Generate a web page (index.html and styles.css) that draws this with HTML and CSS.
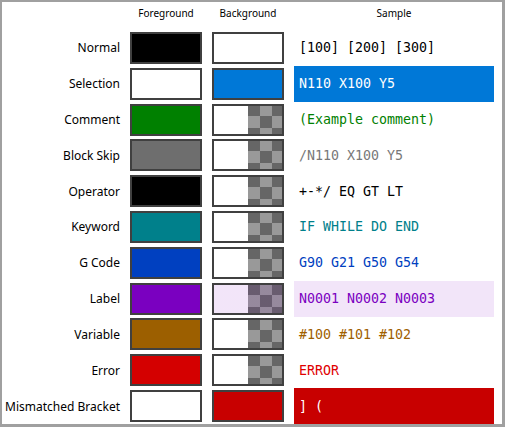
FILE: index.html
```html
<!DOCTYPE html>
<html>
<head>
<meta charset="utf-8">
<link rel="stylesheet" href="styles.css">
</head>
<body>
<div class="panel">
  <div class="head"></div>
  <div class="head">Foreground</div>
  <div class="head">Background</div>
  <div class="head">Sample</div>

  <div class="label">Normal</div>
  <div class="sw k-black"></div>
  <div class="sw k-white"></div>
  <div class="sample t-black">[100] [200] [300]</div>

  <div class="label">Selection</div>
  <div class="sw k-white"></div>
  <div class="sw k-blue"></div>
  <div class="sample t-white k-blue">N110 X100 Y5</div>

  <div class="label">Comment</div>
  <div class="sw k-green"></div>
  <div class="sw check"></div>
  <div class="sample t-green">(Example comment)</div>

  <div class="label">Block Skip</div>
  <div class="sw k-gray"></div>
  <div class="sw check"></div>
  <div class="sample t-gray">/N110 X100 Y5</div>

  <div class="label">Operator</div>
  <div class="sw k-black"></div>
  <div class="sw check"></div>
  <div class="sample t-black">+-*/ EQ GT LT</div>

  <div class="label">Keyword</div>
  <div class="sw k-teal"></div>
  <div class="sw check"></div>
  <div class="sample t-teal">IF WHILE DO END</div>

  <div class="label">G Code</div>
  <div class="sw k-navy"></div>
  <div class="sw check"></div>
  <div class="sample t-navy">G90 G21 G50 G54</div>

  <div class="label">Label</div>
  <div class="sw k-purple"></div>
  <div class="sw check k-tint"></div>
  <div class="sample t-purple k-tint">N0001 N0002 N0003</div>

  <div class="label">Variable</div>
  <div class="sw k-brown"></div>
  <div class="sw check"></div>
  <div class="sample t-brown">#100 #101 #102</div>

  <div class="label">Error</div>
  <div class="sw k-red"></div>
  <div class="sw check"></div>
  <div class="sample t-red">ERROR</div>

  <div class="label">Mismatched Bracket</div>
  <div class="sw k-white"></div>
  <div class="sw k-crimson"></div>
  <div class="sample t-white k-crimson">] (</div>
</div>
</body>
</html>
```

FILE: styles.css
```css
html, body {
  margin: 0;
  padding: 0;
  background: #ffffff;
}

.panel {
  box-sizing: border-box;
  width: 505px;
  height: 427px;
  overflow: hidden;
  border: 2px solid #a0a0a0;
  border-right-width: 3px;
  border-bottom-width: 3px;
  background: #ffffff;
  display: grid;
  grid-template-columns: 118px 72px 72px 200px;
  grid-template-rows: 28px repeat(11, 1fr);
  column-gap: 10px;
  font-family: "Noto Sans", "Open Sans", sans-serif;
  color: #000000;
}

.head {
  font-size: 10px;
  text-align: center;
  padding-top: 4px;
  line-height: 14px;
}

.label {
  font-size: 12px;
  text-align: right;
  align-self: center;
}

.sw {
  --c: transparent;
  box-sizing: border-box;
  width: 72px;
  height: 32px;
  align-self: center;
  border: 2px solid #404040;
  background: var(--c);
}

.sw.check {
  background:
    linear-gradient(var(--c), var(--c)),
    linear-gradient(to right, #ffffff 50%, transparent 50%),
    conic-gradient(#666666 0 90deg, #999999 0 180deg, #666666 0 270deg, #999999 0) 0 0 / 24px 24px;
  background-origin: border-box;
}

.sample {
  --c: transparent;
  display: flex;
  align-items: center;
  padding-left: 5px;
  background: var(--c);
  font-family: "DejaVu Sans Mono", "Liberation Mono", monospace;
  font-size: 13.3px;
  white-space: pre;
}

.k-black { --c: #000000; }
.k-white { --c: #ffffff; }
.k-blue { --c: #0078d7; }
.k-green { --c: #008000; }
.k-gray { --c: #6e6e6e; }
.k-teal { --c: #00808b; }
.k-navy { --c: #0040c0; }
.k-purple { --c: #7a00c0; }
.k-tint { --c: rgba(128, 0, 192, 0.1); }
.k-brown { --c: #9c5f00; }
.k-red { --c: #d40000; }
.k-crimson { --c: #c80000; }

.t-black { color: #000000; }
.t-white { color: #ffffff; }
.t-green { color: #008000; }
.t-gray { color: #787878; }
.t-teal { color: #00808b; }
.t-navy { color: #0040c0; }
.t-purple { color: #7a00c0; }
.t-brown { color: #a06000; }
.t-red { color: #e00000; }
```
